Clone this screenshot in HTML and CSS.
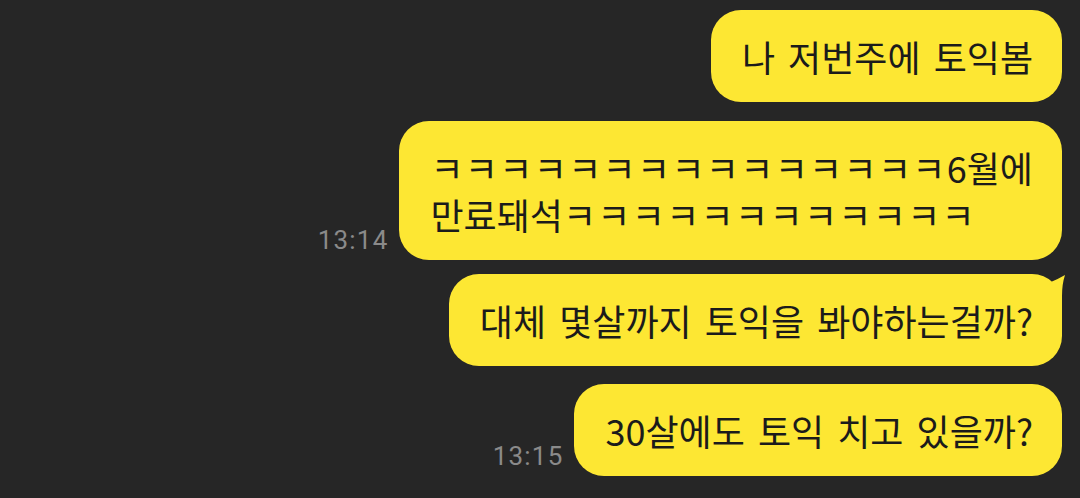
FILE: index.html
```html
<!DOCTYPE html>
<html lang="ko">
<head>
<meta charset="utf-8">
<link rel="stylesheet" href="styles.css">
</head>
<body>
<div class="chat">
  <div class="row">
    <div class="bubble">나 저번주에 토익봄</div>
  </div>
  <div class="row gap-a">
    <span class="time">13:14</span>
    <div class="bubble"><span class="kk">ㅋㅋㅋㅋㅋㅋㅋㅋㅋㅋㅋㅋㅋㅋㅋ</span>6월에<br>만료돼석<span class="kk">ㅋㅋㅋㅋㅋㅋㅋㅋㅋㅋㅋㅋ</span></div>
  </div>
  <div class="row gap-b">
    <div class="bubble">대체 몇살까지 토익을 봐야하는걸까?<svg class="tail" viewBox="-16 0 20 36" width="20" height="36"><path d="M-16 36 L-16 14 L-10 7.6 Q-4 5 3 1 Q0 10 0 22 V36 Z" fill="#fde733"/></svg></div>
  </div>
  <div class="row gap-c">
    <span class="time">13:15</span>
    <div class="bubble">30살에도 토익 치고 있을까?</div>
  </div>
</div>
</body>
</html>
```

FILE: styles.css
```css
html, body {
  margin: 0;
  padding: 0;
  background: #262626;
  width: 1080px;
  height: 498px;
  overflow: hidden;
}

.chat {
  display: flex;
  flex-direction: column;
  padding: 10px 18px 0 0;
}

.row {
  display: flex;
  justify-content: flex-end;
  align-items: flex-end;
  gap: 11px;
}

.gap-a { margin-top: 19px; }
.gap-b { margin-top: 14px; }
.gap-c { margin-top: 18px; }

.bubble {
  position: relative;
  background: #fde733;
  color: #1b1b1b;
  font-family: "Noto Sans CJK KR", "Noto Sans", sans-serif;
  font-size: 36px;
  font-weight: 400;
  line-height: 47px;
  padding: 23px 29px 22px 31px;
  border-radius: 30px;
  white-space: nowrap;
  word-spacing: 3px;
}

.kk {
  letter-spacing: 1.3px;
}

.tail {
  position: absolute;
  top: 0;
  left: calc(100% - 16px);
  overflow: visible;
}

.time {
  font-family: Roboto, "Noto Sans", sans-serif;
  font-size: 26px;
  letter-spacing: 1.2px;
  color: #8a8a8a;
  line-height: 30px;
  padding-bottom: 5px;
}
```
